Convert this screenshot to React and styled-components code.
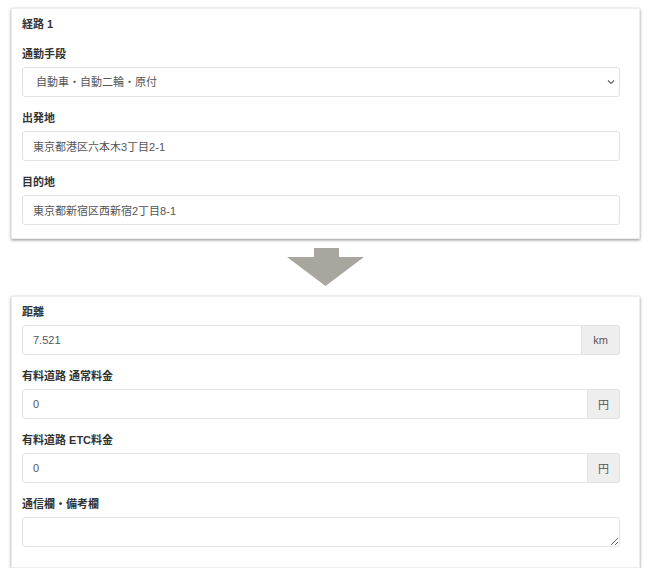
import { styled, createGlobalStyle } from "styled-components";

const GlobalStyle = createGlobalStyle`
  body {
    margin: 0;
    background: #fff;
    font-family: "Liberation Sans", "Noto Sans CJK JP", sans-serif;
    color: #333;
  }
`;

const Page = styled.div`
  padding: 8px 10px 0 11px;
  display: flex;
  flex-direction: column;
`;

const Card = styled.section`
  background: #fff;
  border: 1px solid #ececec;
  box-shadow: 0 1px 3px rgba(0, 0, 0, 0.35), 0 2px 2px rgba(0, 0, 0, 0.08);
  padding: 7px 19px ${(props) => props.bottom || 13}px 10px;
  display: flex;
  flex-direction: column;
  gap: 13px;
`;

const Title = styled.div`
  font-size: 11px;
  font-weight: bold;
  line-height: 16px;
  margin-bottom: 1px;
`;

const Field = styled.div`
  display: flex;
  flex-direction: column;
  gap: 5px;
`;

const Label = styled.label`
  font-size: 11px;
  font-weight: bold;
  line-height: 16px;
`;

const Input = styled.input`
  box-sizing: border-box;
  height: 30px;
  width: 100%;
  min-width: 0;
  border: 1px solid #e3e3e3;
  border-radius: ${(props) => (props.$addon ? "3px 0 0 3px" : "3px")};
  padding: 0 10px;
  font-family: inherit;
  font-size: 11px;
  color: #555;
  background: #fff;
  outline: none;
`;

const SelectWrap = styled.div`
  position: relative;
`;

const Select = styled.select`
  box-sizing: border-box;
  height: 30px;
  width: 100%;
  appearance: none;
  border: 1px solid #e3e3e3;
  border-radius: 3px;
  padding: 0 13px;
  font-family: inherit;
  font-size: 11px;
  color: #555;
  background: #fff;
  outline: none;
`;

const Chevron = styled.svg`
  position: absolute;
  right: 5px;
  top: 12px;
  pointer-events: none;
`;

const Group = styled.div`
  display: flex;
`;

const Addon = styled.span`
  box-sizing: border-box;
  height: 30px;
  display: flex;
  align-items: center;
  padding: 0 ${(props) => props.pad || 11}px;
  background: #eee;
  border: 1px solid #e3e3e3;
  border-left: none;
  border-radius: 0 3px 3px 0;
  font-size: 11px;
  color: #555;
  white-space: nowrap;
`;

const TextArea = styled.textarea`
  box-sizing: border-box;
  height: 30px;
  width: 100%;
  border: 1px solid #e3e3e3;
  border-radius: 3px;
  padding: 6px 10px;
  font-family: inherit;
  font-size: 11px;
  color: #555;
  outline: none;
`;

const ArrowRow = styled.div`
  display: flex;
  justify-content: center;
  padding: 9px 0 10px;
`;

const UnitField = ({ label, value, unit, pad }) => (
  <Field>
    <Label>{label}</Label>
    <Group>
      <Input $addon defaultValue={value} />
      <Addon pad={pad}>{unit}</Addon>
    </Group>
  </Field>
);

const App = () => {
  return (
    <Page>
      <GlobalStyle />
      <Card>
        <Title>経路 1</Title>
        <Field>
          <Label>通勤手段</Label>
          <SelectWrap>
            <Select defaultValue="car">
              <option value="car">自動車・自動二輪・原付</option>
            </Select>
            <Chevron width="8" height="6" viewBox="0 0 8 6">
              <path d="M1 1.5 L4 4.5 L7 1.5" fill="none" stroke="#666" strokeWidth="1.2" />
            </Chevron>
          </SelectWrap>
        </Field>
        <Field>
          <Label>出発地</Label>
          <Input defaultValue="東京都港区六本木3丁目2-1" />
        </Field>
        <Field>
          <Label>目的地</Label>
          <Input defaultValue="東京都新宿区西新宿2丁目8-1" />
        </Field>
      </Card>

      <ArrowRow>
        <svg width="77" height="38" viewBox="0 0 77 38">
          <path d="M27 0 H52 V9 H77 L38.5 38 L0 9 H27 Z" fill="#a9a69f" />
        </svg>
      </ArrowRow>

      <Card bottom={20}>
        <UnitField label="距離" value="7.521" unit="km" pad={11} />
        <UnitField label="有料道路 通常料金" value="0" unit="円" pad={10} />
        <UnitField label="有料道路 ETC料金" value="0" unit="円" pad={10} />
        <Field>
          <Label>通信欄・備考欄</Label>
          <TextArea />
        </Field>
      </Card>
    </Page>
  );
};

export default App;
